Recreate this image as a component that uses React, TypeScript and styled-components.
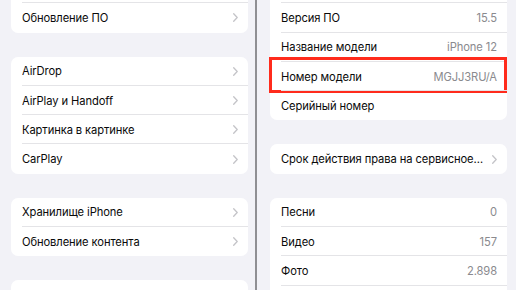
import React from "react"
import styled, { createGlobalStyle } from "styled-components"

const GlobalStyle = createGlobalStyle`
  html, body {
    margin: 0;
    padding: 0;
    background: #f2f2f7;
  }

  body {
    font-family: Inter, "Noto Sans", "Liberation Sans", sans-serif;
    -webkit-font-smoothing: antialiased;
  }
`

const Screen = styled.div`
  display: flex;
  width: 516px;
  height: 290px;
  overflow: hidden;
  background: #f2f2f7;
`

const Panel = styled.div<{ $width: number; $left: number; $right: number }>`
  display: flex;
  flex-direction: column;
  gap: 24px;
  flex: 0 0 ${({ $width }) => $width}px;
  padding: 0 ${({ $right }) => $right}px 0 ${({ $left }) => $left}px;
  box-sizing: border-box;
  overflow: hidden;
`

const Divider = styled.div`
  flex: 0 0 2px;
  background: #8f8f93;
`

const Card = styled.ul<{ $offset?: number }>`
  margin: 0;
  margin-top: ${({ $offset }) => ($offset ? -$offset : 0)}px;
  padding: 0;
  list-style: none;
  background: #ffffff;
  border-radius: 7px;
  flex-shrink: 0;
`

const Row = styled.li`
  position: relative;
  display: flex;
  align-items: center;
  height: 29.3px;
  padding: 0 10px 0 11px;
  font-size: 11.2px;
  letter-spacing: -0.1px;
  color: #0a0a0a;

  &:not(:last-child)::after {
    content: '';
    position: absolute;
    left: 11px;
    right: 0;
    bottom: 0;
    height: 1px;
    background: #e4e4e7;
  }
`

const Label = styled.span`
  flex: 1;
  white-space: nowrap;
  overflow: hidden;
  text-overflow: ellipsis;
`

const Value = styled.span`
  margin-left: 8px;
  color: #8a8a8e;
  white-space: nowrap;
`

const Highlight = styled.div`
  position: absolute;
  top: -5px;
  bottom: -2px;
  left: -1px;
  right: 0;
  border: 3px solid #ff2b1c;
  pointer-events: none;
`

const Chevron = () => (
  <svg width="5" height="9" viewBox="0 0 5 9" style={{ marginLeft: 8, flexShrink: 0 }}>
    <polyline points="0.7,0.7 4.2,4.5 0.7,8.3" fill="none" stroke="#c4c4c8" strokeWidth="1.3" strokeLinecap="round" strokeLinejoin="round" />
  </svg>
)

type Item = { label: string; value?: string; link?: boolean; marked?: boolean }

const Section: React.FC<{ items: Item[]; offset?: number }> = ({ items, offset }) => (
  <Card $offset={offset}>
    {items.map((item) => (
      <Row key={item.label}>
        <Label>{item.label}</Label>
        {item.value !== undefined && <Value>{item.value}</Value>}
        {item.link && <Chevron />}
        {item.marked && <Highlight />}
      </Row>
    ))}
  </Card>
)

const App: React.FC = () => {
  return (
    <>
      <GlobalStyle />
      <Screen>
        <Panel $width={255} $left={11} $right={7}>
          <Section
            offset={26}
            items={[
              { label: "Об этом устройстве", link: true },
              { label: "Обновление ПО", link: true },
            ]}
          />
          <Section
            items={[
              { label: "AirDrop", link: true },
              { label: "AirPlay и Handoff", link: true },
              { label: "Картинка в картинке", link: true },
              { label: "CarPlay", link: true },
            ]}
          />
          <Section
            items={[
              { label: "Хранилище iPhone", link: true },
              { label: "Обновление контента", link: true },
            ]}
          />
          <Section
            items={[
              { label: "Дата и время", link: true },
              { label: "Клавиатура", link: true },
            ]}
          />
        </Panel>
        <Divider />
        <Panel $width={259} $left={13} $right={9}>
          <Section
            offset={26}
            items={[
              { label: "Имя", value: "iPhone", link: true },
              { label: "Версия ПО", value: "15.5" },
              { label: "Название модели", value: "iPhone 12" },
              { label: "Номер модели", value: "MGJJ3RU/A", marked: true },
              { label: "Серийный номер", value: "" },
            ]}
          />
          <Section
            items={[{ label: "Срок действия права на сервисное обслуживание", link: true }]}
          />
          <Section
            items={[
              { label: "Песни", value: "0" },
              { label: "Видео", value: "157" },
              { label: "Фото", value: "2.898" },
              { label: "Программы", value: "64" },
            ]}
          />
        </Panel>
      </Screen>
    </>
  )
}

export default App
